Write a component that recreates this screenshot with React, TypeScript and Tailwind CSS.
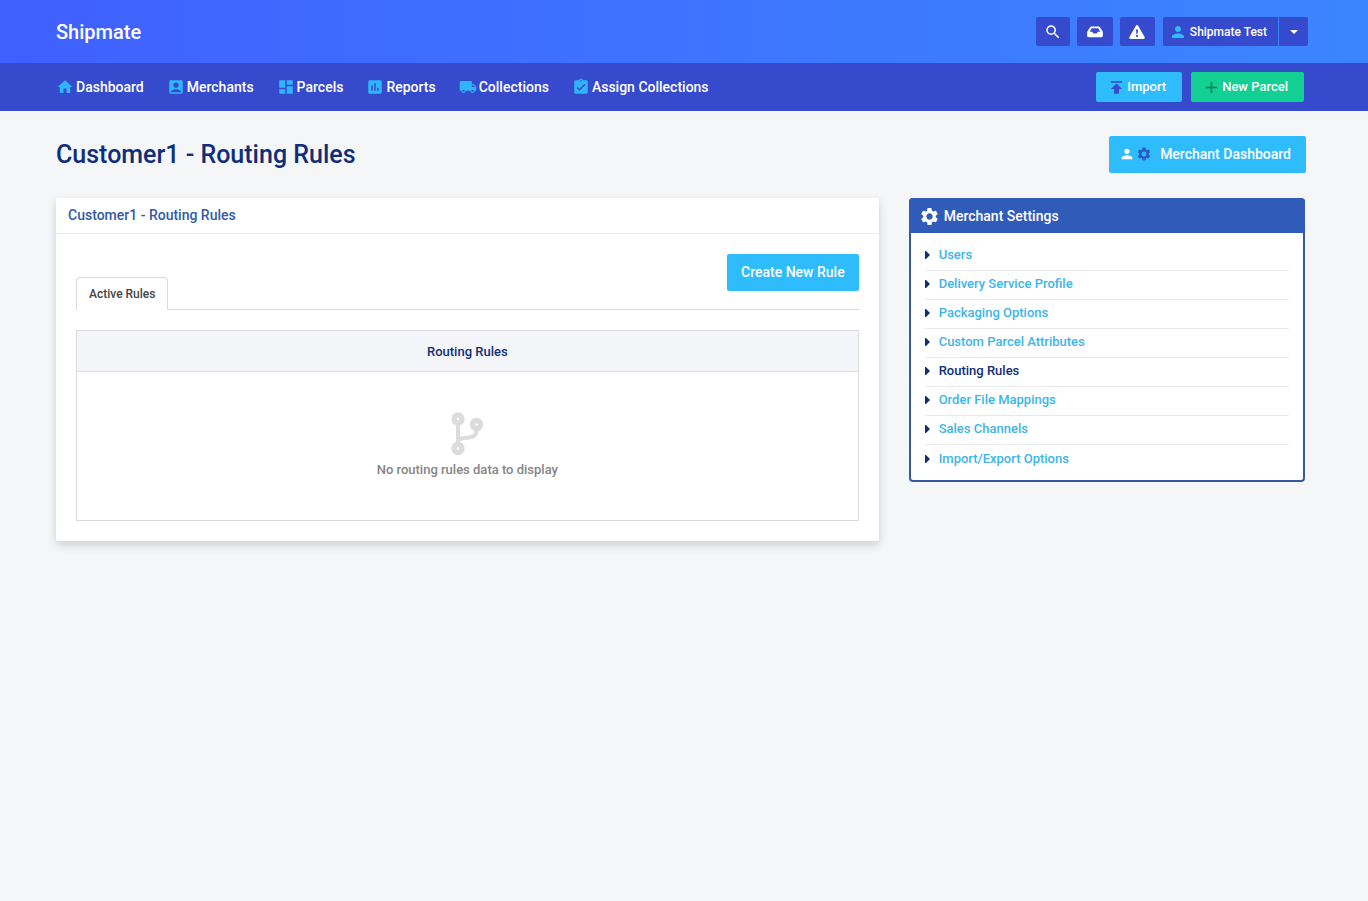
import type { IconType } from 'react-icons'
import {
  MdAccountBox,
  MdAdd,
  MdAssessment,
  MdAssignmentTurnedIn,
  MdDashboard,
  MdHome,
  MdLocalShipping,
  MdPerson,
  MdPublish,
  MdSearch,
  MdSettings,
} from 'react-icons/md'

interface NavItem {
  label: string
  icon: IconType
}

const navItems: NavItem[] = [
  { label: 'Dashboard', icon: MdHome },
  { label: 'Merchants', icon: MdAccountBox },
  { label: 'Parcels', icon: MdDashboard },
  { label: 'Reports', icon: MdAssessment },
  { label: 'Collections', icon: MdLocalShipping },
  { label: 'Assign Collections', icon: MdAssignmentTurnedIn },
]

const settingsLinks = [
  'Users',
  'Delivery Service Profile',
  'Packaging Options',
  'Custom Parcel Attributes',
  'Routing Rules',
  'Order File Mappings',
  'Sales Channels',
  'Import/Export Options',
]

function InboxIcon() {
  return (
    <svg width="16" height="12" viewBox="0 0 16 12" fill="none" aria-hidden="true">
      <path
        fill="#fff"
        fillRule="evenodd"
        d="M4.6.5h6.8c.7 0 1.3.3 1.7.9l2.4 3.9c.3.4.4.8.4 1.3v3c0 1-.7 1.7-1.7 1.7H1.8C.8 11.3.1 10.6.1 9.6v-3c0-.5.1-.9.4-1.3l2.4-3.9C3.3.8 3.9.5 4.6.5ZM4.7 2.3 2.7 5.7H5.3l1 1.9h3.4l1-1.9h2.6l-2-3.4H4.7Z"
      />
    </svg>
  )
}

function WarningIcon() {
  return (
    <svg width="16" height="14" viewBox="0 0 16 14" fill="none" aria-hidden="true">
      <path
        fill="#fff"
        fillRule="evenodd"
        d="M6.9.7a1.25 1.25 0 0 1 2.2 0l6.5 11.2c.5.9-.1 2-1.1 2h-13c-1 0-1.6-1.1-1.1-2L6.9.7ZM7 4.4l.3 4.4h1.4L9 4.4H7Zm1 5.4a1.1 1.1 0 1 0 0 2.2 1.1 1.1 0 0 0 0-2.2Z"
      />
    </svg>
  )
}

function BranchIcon() {
  return (
    <svg width="34" height="44" viewBox="0 0 34 44" fill="none" stroke="#dcdcdc" aria-hidden="true">
      <circle cx="8" cy="7" r="4" strokeWidth="5.4" />
      <circle cx="8" cy="36.5" r="4" strokeWidth="5.4" />
      <circle cx="26.5" cy="12.5" r="4" strokeWidth="5.4" />
      <path d="M8 12v20M26.5 17v1.5c0 4.5-3 6.5-7.5 7-5 .5-11 .5-11 4" strokeWidth="4" />
    </svg>
  )
}

function TopBar() {
  return (
    <header className="flex h-[63px] items-center justify-between bg-linear-to-r from-[#4060ff] to-[#3b85ff] pr-[60px] pl-14">
      <a href="#" className="text-xl font-medium">Shipmate</a>
      <div className="flex text-xs font-medium">
        <button aria-label="Search" className="mr-[7px] flex h-[29px] w-[34px] items-center justify-center rounded-xs bg-[#364ace]">
          <MdSearch size={18} />
        </button>
        <button aria-label="Inbox" className="mr-[7px] flex h-[29px] w-9 items-center justify-center rounded-xs bg-[#364ace]">
          <InboxIcon />
        </button>
        <button aria-label="Alerts" className="mr-2 flex h-[29px] w-[35px] items-center justify-center rounded-xs bg-[#364ace]">
          <WarningIcon />
        </button>
        <button className="mr-px flex h-[29px] items-center gap-[3px] rounded-l-xs bg-[#364ace] pr-[11px] pl-[6px]">
          <MdPerson size={18} className="text-[#2fbcfd]" />
          Shipmate Test
        </button>
        <button aria-label="Account menu" className="flex h-[29px] w-[29px] items-center justify-center rounded-r-xs bg-[#364ace]">
          <svg width="8" height="4" viewBox="0 0 8 4" aria-hidden="true">
            <path d="M0 0h8L4 4z" fill="#fff" />
          </svg>
        </button>
      </div>
    </header>
  )
}

function NavBar() {
  return (
    <nav className="flex h-12 items-center justify-between bg-[#364ace] pr-16 pl-14 text-sm font-medium">
      <div className="flex gap-[23px]">
        {navItems.map(({ label, icon: Icon }) => (
          <a key={label} href="#" className="flex items-center gap-[2px]">
            <Icon size={18} className="text-[#2fb4fd]" />
            {label}
          </a>
        ))}
      </div>
      <div className="flex gap-[9px] text-[13px]">
        <button className="flex h-[30px] items-center gap-px rounded-xs bg-[#2fbcfd] pr-4 pl-[11px]">
          <MdPublish size={19} className="text-[#364ace]" />
          Import
        </button>
        <button className="flex h-[30px] items-center gap-px rounded-xs bg-[#12cf92] pr-4 pl-[11px]">
          <MdAdd size={19} className="text-[#0b7a55]" />
          New Parcel
        </button>
      </div>
    </nav>
  )
}

function RulesPanel() {
  return (
    <section className="col-span-8 rounded-xs bg-white shadow-[0_4px_10px_rgba(0,0,30,0.16)]">
      <h2 className="border-b border-[#e8eaec] px-3 pt-[6px] pb-[7px] text-sm leading-[22px] font-medium text-[#335aa6]">
        Customer1 - Routing Rules
      </h2>
      <div className="p-5">
        <div className="flex items-start justify-between border-b border-[#d9dbdd]">
          <button className="mt-[23px] -mb-px h-[33px] rounded-t-sm border border-b-0 border-[#d9dbdd] bg-white px-3 text-xs font-medium text-[#444]">
            Active Rules
          </button>
          <button className="mb-[18px] h-[37px] rounded-xs bg-[#2fbcfd] px-[14px] pb-px text-sm font-medium text-white">
            Create New Rule
          </button>
        </div>
        <table className="mt-5 w-full border border-[#d9dbdd]">
          <thead>
            <tr className="border-b border-[#d9dbdd] bg-[#f4f5f8]">
              <th className="h-[41px] pt-px text-[13px] font-medium text-[#102e78]">Routing Rules</th>
            </tr>
          </thead>
          <tbody>
            <tr>
              <td className="py-10 text-[13px] leading-5 font-medium text-[#858585]">
                <div className="flex flex-col items-center gap-1">
                  <BranchIcon />
                  <p>No routing rules data to display</p>
                </div>
              </td>
            </tr>
          </tbody>
        </table>
      </div>
    </section>
  )
}

function SettingsPanel() {
  return (
    <aside className="col-span-4 rounded border-2 border-[#365a9f] bg-white">
      <h2 className="-mx-0.5 -mt-0.5 flex h-[35px] items-center gap-1 rounded-t bg-[#315bb8] pt-px pl-[10px] text-sm font-medium text-white">
        <MdSettings size={21} />
        Merchant Settings
      </h2>
      <ul className="px-[14px] pt-[9px] pb-[6px] text-[13px] font-medium">
        {settingsLinks.map((label) => (
          <li key={label} className="flex h-[29px] items-center gap-[9px] border-b border-[#e8eaec] pb-[2px] last:border-b-0">
            <svg width="5" height="8" viewBox="0 0 5 8" aria-hidden="true">
              <path d="M0 0h1l4 4-4 4H0z" fill="#102e78" />
            </svg>
            <a href="#" className={label === 'Routing Rules' ? 'text-[#102e78]' : 'text-[#3db5e6]'}>
              {label}
            </a>
          </li>
        ))}
      </ul>
    </aside>
  )
}

export default function App() {
  return (
    <div className="min-h-screen bg-[#f4f6f8] font-[Roboto,sans-serif] text-white">
      <TopBar />
      <NavBar />
      <main>
        <div className="flex items-center justify-between py-[25px] pr-[62px] pl-14">
          <h1 className="text-[25px] leading-[37px] font-medium text-[#102e78]">Customer1 - Routing Rules</h1>
          <button className="flex h-[37px] items-center rounded-xs bg-[#2fbcfd] pr-[15px] pb-px pl-[10px] text-sm font-medium">
            <MdPerson size={16} className="mr-px" />
            <MdSettings size={16} className="mr-2 text-[#2a5cc4]" />
            Merchant Dashboard
          </button>
        </div>
        <div className="grid grid-cols-12 items-start gap-[30px] pr-[63px] pl-14">
          <RulesPanel />
          <SettingsPanel />
        </div>
      </main>
    </div>
  )
}
